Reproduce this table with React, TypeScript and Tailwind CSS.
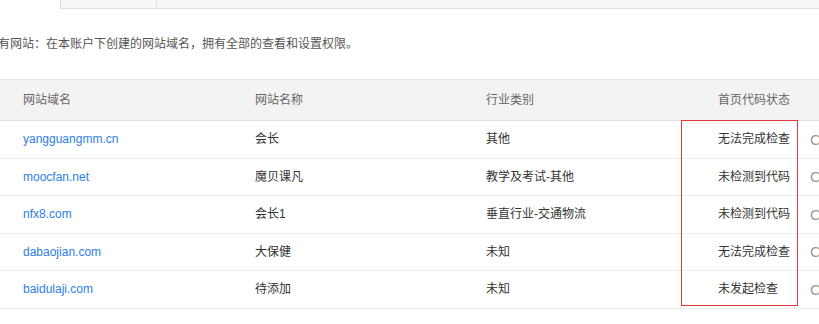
import React from 'react';

type Site = { domain: string; name: string; category: string; status: string };

const sites: Site[] = [
  { domain: 'yangguangmm.cn', name: '会长', category: '其他', status: '无法完成检查' },
  { domain: 'moocfan.net', name: '魔贝课凡', category: '教学及考试-其他', status: '未检测到代码' },
  { domain: 'nfx8.com', name: '会长1', category: '垂直行业-交通物流', status: '未检测到代码' },
  { domain: 'dabaojian.com', name: '大保健', category: '未知', status: '无法完成检查' },
  { domain: 'baidulaji.com', name: '待添加', category: '未知', status: '未发起检查' },
];

const cols = 'grid grid-cols-[255px_231px_195px_116px_1fr] items-center';
const font = { fontFamily: '"Liberation Sans", "Noto Sans CJK SC", Arial, sans-serif' };

export default function App() {
  return (
    <div className="w-[819px] h-[324px] overflow-hidden bg-white text-[12px]" style={font}>
      {/* tab strip */}
      <div className="ml-[60px] flex h-[9px] border-b border-[#e0e0e0] bg-[#f7f7f7]">
        <div className="w-[97px] border-l border-r border-[#e0e0e0]" />
        <div className="flex-1" />
      </div>

      <p className="-ml-[2px] mt-[27px] h-[16px] whitespace-nowrap leading-[16px] text-[#555]">
        有网站：在本账户下创建的网站域名，拥有全部的查看和设置权限。
      </p>

      <div className="mt-[27px] border-t border-[#e3e3e3]">
        <div className={`${cols} h-[41px] border-b border-[#e0e0e0] bg-[#f3f3f3] text-[#666]`}>
          <span className="pl-[23px]">网站域名</span>
          <span>网站名称</span>
          <span>行业类别</span>
          <span className="pl-[37px] whitespace-nowrap">首页代码状态</span>
          <span />
        </div>

        <div className="relative">
          {sites.map((s) => (
            <div key={s.domain} className={`${cols} h-[37.5px] border-b border-[#ececec]`}>
              <a className="pl-[23px] text-[#2d7ee6]">{s.domain}</a>
              <span className="text-[#333]">{s.name}</span>
              <span className="text-[#333]">{s.category}</span>
              <span className="pl-[37px] whitespace-nowrap text-[#333]">{s.status}</span>
              <span className="pl-[13px] text-[15px] leading-none text-[#999]">C</span>
            </div>
          ))}
          {/* highlight around the status column */}
          <div className="pointer-events-none absolute left-[681px] top-[-1px] h-[186px] w-[117px] border border-[#e3393c]" />
        </div>
      </div>
    </div>
  );
}
